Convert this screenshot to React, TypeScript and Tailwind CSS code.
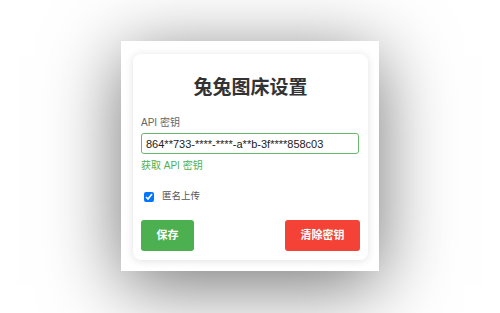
import React from "react";

export default function App() {
  const font = { fontFamily: '"Liberation Sans", "Noto Sans CJK SC", sans-serif' };
  return (
    <div className="w-[500px] h-[313px] bg-white flex items-start justify-center overflow-hidden" style={font}>
      <div className="mt-[41px] w-[258px] h-[230px] bg-white shadow-[0_14px_70px_rgba(0,0,0,0.55)] pt-[13px] pl-[12px] pr-[11px] pb-[11px]">
        <div className="w-[235px] h-[206px] bg-white rounded-[8px] shadow-[0_1px_8px_rgba(0,0,0,0.12)] px-[8px] pt-[22px] flex flex-col">
          <h1 className="text-center text-[19px] leading-[23px] font-bold text-[#333]">兔兔图床设置</h1>
          <div className="mt-[18px] text-[10px] leading-[12px] text-[#666]">API 密钥</div>
          <input
            readOnly
            value="864**733-****-****-a**b-3f****858c03"
            className="mt-[4px] w-[218px] h-[21px] border border-[#66bb6a] rounded-[3px] px-[4px] text-[11px] text-[#222] outline-none"
            style={font}
          />
          <a className="mt-[6px] text-[10px] leading-[12px] text-[#4caf50]">获取 API 密钥</a>
          <div className="mt-[17px] flex items-start h-[14px]">
            <input type="checkbox" defaultChecked className="mt-[3px] ml-[3px] w-[10px] h-[10px] accent-[#0075ff] m-0" />
            <span className="ml-[8px] mt-[1px] text-[9.5px] leading-[12px] text-[#555]">匿名上传</span>
          </div>
          <div className="mt-[17px] flex justify-between">
            <button className="w-[53px] h-[31px] rounded-[3px] bg-[#4caf50] text-white text-[11px] font-bold">保存</button>
            <button className="w-[75px] h-[31px] rounded-[3px] bg-[#f44336] text-white text-[11px] font-bold">清除密钥</button>
          </div>
        </div>
      </div>
    </div>
  );
}
